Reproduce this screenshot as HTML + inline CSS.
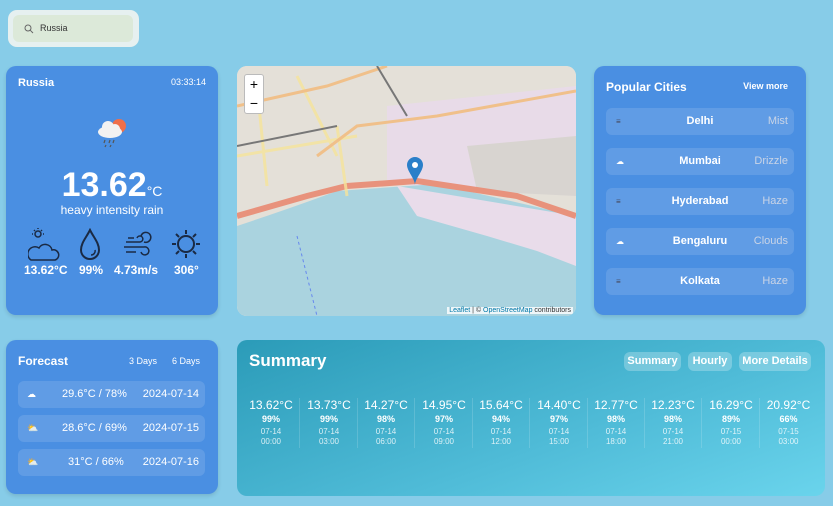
<!DOCTYPE html>
<html><head><meta charset="utf-8"><style>
*{box-sizing:border-box;margin:0;padding:0}
body{width:833px;height:506px;background:#87cce8;font-family:"Liberation Sans",sans-serif;color:#fff;position:relative;overflow:hidden}
.card{position:absolute;background:#4a8fe2;border-radius:10px;box-shadow:0 2px 4px rgba(0,0,0,.12)}
.abs{position:absolute;white-space:nowrap}
.row{position:absolute;background:rgba(255,255,255,.12);border-radius:6px;font-size:11px}
.col{position:absolute;top:398px;width:57px;text-align:center;border-right:1px solid rgba(255,255,255,.15);height:50px}
.col .t{font-size:12px;}
.col .h{font-size:9px;font-weight:bold;margin-top:2px}
.col .d{font-size:8px;opacity:.8;margin-top:3px;line-height:10px}
.btn{position:absolute;top:352px;height:19px;background:rgba(255,255,255,.25);border-radius:6px;font-size:11px;line-height:19px;text-align:center;font-weight:bold;white-space:nowrap}
</style></head><body>
<div class="abs" style="left:8px;top:10px;width:131px;height:37px;background:#e6f0f0;border-radius:9px"></div>
<div class="abs" style="left:13px;top:15px;width:120px;height:27px;background:#dce9d9;border-radius:6px;font-size:9px;color:#333;line-height:27px;padding-left:27px">Russia</div>
<svg class="abs" style="left:24px;top:24px" width="10" height="10"><circle cx="4" cy="4" r="3" fill="none" stroke="#666" stroke-width="1"/><line x1="6.3" y1="6.3" x2="9" y2="9" stroke="#666"/></svg>

<div class="card" style="left:6px;top:66px;width:212px;height:249px">
<div class="abs" style="left:12px;top:11px;font-size:11px;font-weight:bold">Russia</div>
<div class="abs" style="right:12px;top:11px;font-size:9px">03:33:14</div>
<svg class="abs" style="left:88px;top:50px" width="36" height="34"><circle cx="25" cy="10" r="7" fill="#ef6f4a"/><ellipse cx="16" cy="16" rx="12" ry="6" fill="#f2f2f2"/><circle cx="14" cy="11" r="6" fill="#f2f2f2"/><circle cx="21" cy="13" r="5" fill="#f2f2f2"/><g stroke="#555" stroke-width="1.2"><line x1="11" y1="24" x2="10" y2="27"/><line x1="16" y1="24" x2="15" y2="27"/><line x1="20" y1="24" x2="19" y2="27"/><line x1="12" y1="29" x2="11" y2="31"/><line x1="17" y1="29" x2="16" y2="31"/></g></svg>
<div class="abs" style="left:0;width:212px;top:100px;text-align:center;font-size:34px;font-weight:bold;line-height:38px">13.62<span style="font-size:14px;font-weight:normal">°C</span></div>
<div class="abs" style="left:0;width:212px;top:137px;text-align:center;font-size:12px">heavy intensity rain</div>
<svg class="abs" style="left:22px;top:162px" width="180" height="34" fill="none" stroke="#1a2a44" stroke-width="1.5">
<circle cx="10" cy="6" r="3"/><path d="M10 0v1M4 6h1M15 6h1M6 2l1 1M14 2l-1 1"/>
<path d="M3 32h24a5 5 0 0 0-3-10a7 7 0 0 0-13-2a6 6 0 0 0-8 12z"/>
<path d="M62 2c-4 8-9 13-9 20a9 9 0 0 0 18 0c0-7-5-12-9-20z" stroke-width="2"/><path d="M67 22a4 4 0 0 1-4 5"/>
<path d="M98 14h14a3 3 0 1 0-3-4M96 19h20a4 4 0 1 1-3 5M98 24h10M100 10h6" /><path d="M113 8a5 5 0 1 1 3 6"/>
<circle cx="158" cy="16" r="8" stroke-width="2"/><path d="M158 2v4M158 26v4M144 16h4M168 16h4M148 6l3 3M168 6l-3 3M148 26l3-3M168 26l-3-3" stroke-width="2"/>
</svg>
<div class="abs" style="top:197px;left:18px;font-size:12px;font-weight:bold">13.62°C</div>
<div class="abs" style="top:197px;left:73px;font-size:12px;font-weight:bold">99%</div>
<div class="abs" style="top:197px;left:108px;font-size:12px;font-weight:bold">4.73m/s</div>
<div class="abs" style="top:197px;left:168px;font-size:12px;font-weight:bold">306°</div>
</div>

<div class="abs" style="left:237px;top:66px;width:339px;height:250px;border-radius:10px;overflow:hidden;background:#eae6df">
<svg width="339" height="250" style="position:absolute;left:0;top:0">
<rect width="339" height="250" fill="#e4e0d8"/>
<path d="M150 40L339 20V130L150 118Z" fill="#e8dbe8"/>
<path d="M230 80L339 70V130L240 125Z" fill="#d8d4d0"/>
<path d="M0 160Q60 140 100 125L200 118 339 150V250H0Z" fill="#aad3df"/>
<path d="M160 120L339 150V200L300 185 250 170 180 150Z" fill="#e9dcea"/>
<path d="M0 150L70 130 110 120 180 115 280 130 339 150" stroke="#e8927c" stroke-width="6" fill="none"/>
<path d="M30 120L20 20M60 10L100 90M0 90L120 70M100 60L110 130" stroke="#f5e39a" stroke-width="3" fill="none" opacity=".8"/>
<path d="M0 40L90 20 150 0M80 90L120 60 200 50 339 25" stroke="#f0c08a" stroke-width="3" fill="none"/>
<path d="M0 80L100 60M140 0L170 50" stroke="#777" stroke-width="2" fill="none"/>
<path d="M60 170L80 250" stroke="#6688ee" stroke-width="1" stroke-dasharray="3 3"/>
<path d="M170 99a8 8 0 0 1 16 0c0 6-8 14-8 20c0-6-8-14-8-20z" fill="#2a7fc9"/><circle cx="178" cy="99" r="3" fill="#fff"/>
</svg>
<div class="abs" style="left:7px;top:8px;width:20px;height:40px;background:#fff;border:1px solid #bbb;border-radius:3px;color:#000;font-size:14px;text-align:center;line-height:19px">+<br>−</div>
<div class="abs" style="right:3px;bottom:2px;background:rgba(255,255,255,.8);color:#333;font-size:7px;padding:0 2px"><span style="color:#0078a8">Leaflet</span> | © <span style="color:#0078a8">OpenStreetMap</span> contributors</div>
</div>

<div class="card" style="left:594px;top:66px;width:212px;height:249px">
<div class="abs" style="left:12px;top:14px;font-size:12px;font-weight:bold">Popular Cities</div>
<div class="abs" style="right:18px;top:15px;font-size:9px;font-weight:bold">View more</div>
</div>
<div class="row" style="left:606px;top:108px;width:188px;height:27px"></div>
<div class="row" style="left:606px;top:148px;width:188px;height:27px"></div>
<div class="row" style="left:606px;top:188px;width:188px;height:27px"></div>
<div class="row" style="left:606px;top:228px;width:188px;height:27px"></div>
<div class="row" style="left:606px;top:268px;width:188px;height:27px"></div>
<div class="abs" style="left:606px;top:115px;width:188px;font-size:11px;line-height:13px">
<div style="position:relative;height:40px"><span style="position:absolute;left:10px;font-size:8px;color:#445">≡</span><span style="position:absolute;left:0;width:188px;text-align:center;font-weight:bold">Delhi</span><span style="position:absolute;right:6px;color:#c9d4e6">Mist</span></div>
<div style="position:relative;height:40px"><span style="position:absolute;left:10px;font-size:8px">☁</span><span style="position:absolute;left:0;width:188px;text-align:center;font-weight:bold">Mumbai</span><span style="position:absolute;right:6px;color:#c9d4e6">Drizzle</span></div>
<div style="position:relative;height:40px"><span style="position:absolute;left:10px;font-size:8px;color:#445">≡</span><span style="position:absolute;left:0;width:188px;text-align:center;font-weight:bold">Hyderabad</span><span style="position:absolute;right:6px;color:#c9d4e6">Haze</span></div>
<div style="position:relative;height:40px"><span style="position:absolute;left:10px;font-size:8px">☁</span><span style="position:absolute;left:0;width:188px;text-align:center;font-weight:bold">Bengaluru</span><span style="position:absolute;right:6px;color:#c9d4e6">Clouds</span></div>
<div style="position:relative;height:40px"><span style="position:absolute;left:10px;font-size:8px;color:#445">≡</span><span style="position:absolute;left:0;width:188px;text-align:center;font-weight:bold">Kolkata</span><span style="position:absolute;right:6px;color:#c9d4e6">Haze</span></div>
</div>

<div class="card" style="left:6px;top:340px;width:212px;height:154px">
<div class="abs" style="left:12px;top:14px;font-size:12px;font-weight:bold">Forecast</div>
<div class="abs" style="left:123px;top:16px;font-size:9px">3 Days</div>
<div class="abs" style="left:166px;top:16px;font-size:9px">6 Days</div>
</div>
<div class="row" style="left:18px;top:381px;width:187px;height:27px;line-height:27px"><span style="position:absolute;left:9px;font-size:9px">☁</span><span style="position:absolute;left:44px">29.6°C / 78%</span><span style="position:absolute;right:6px">2024-07-14</span></div>
<div class="row" style="left:18px;top:415px;width:187px;height:27px;line-height:27px"><span style="position:absolute;left:9px;font-size:9px">⛅</span><span style="position:absolute;left:44px">28.6°C / 69%</span><span style="position:absolute;right:6px">2024-07-15</span></div>
<div class="row" style="left:18px;top:449px;width:187px;height:27px;line-height:27px"><span style="position:absolute;left:9px;font-size:9px">⛅</span><span style="position:absolute;left:50px">31°C / 66%</span><span style="position:absolute;right:6px">2024-07-16</span></div>

<div class="abs" style="left:237px;top:340px;width:588px;height:156px;border-radius:10px;background:linear-gradient(160deg,#2b9bb8,#50bcd8 60%,#6ad4ec)"></div>
<div class="abs" style="left:249px;top:351px;font-size:17px;font-weight:bold">Summary</div>
<div class="btn" style="left:624px;width:57px">Summary</div>
<div class="btn" style="left:688px;width:44px">Hourly</div>
<div class="btn" style="left:739px;width:72px">More Details</div>
<div class="col" style="left:243px"><div class="t">13.62°C</div><div class="h">99%</div><div class="d">07-14<br>00:00</div></div>
<div class="col" style="left:301px"><div class="t">13.73°C</div><div class="h">99%</div><div class="d">07-14<br>03:00</div></div>
<div class="col" style="left:358px"><div class="t">14.27°C</div><div class="h">98%</div><div class="d">07-14<br>06:00</div></div>
<div class="col" style="left:416px"><div class="t">14.95°C</div><div class="h">97%</div><div class="d">07-14<br>09:00</div></div>
<div class="col" style="left:473px"><div class="t">15.64°C</div><div class="h">94%</div><div class="d">07-14<br>12:00</div></div>
<div class="col" style="left:531px"><div class="t">14.40°C</div><div class="h">97%</div><div class="d">07-14<br>15:00</div></div>
<div class="col" style="left:588px"><div class="t">12.77°C</div><div class="h">98%</div><div class="d">07-14<br>18:00</div></div>
<div class="col" style="left:645px"><div class="t">12.23°C</div><div class="h">98%</div><div class="d">07-14<br>21:00</div></div>
<div class="col" style="left:703px"><div class="t">16.29°C</div><div class="h">89%</div><div class="d">07-15<br>00:00</div></div>
<div class="col" style="left:760px;border-right:none"><div class="t">20.92°C</div><div class="h">66%</div><div class="d">07-15<br>03:00</div></div>
</body></html>
